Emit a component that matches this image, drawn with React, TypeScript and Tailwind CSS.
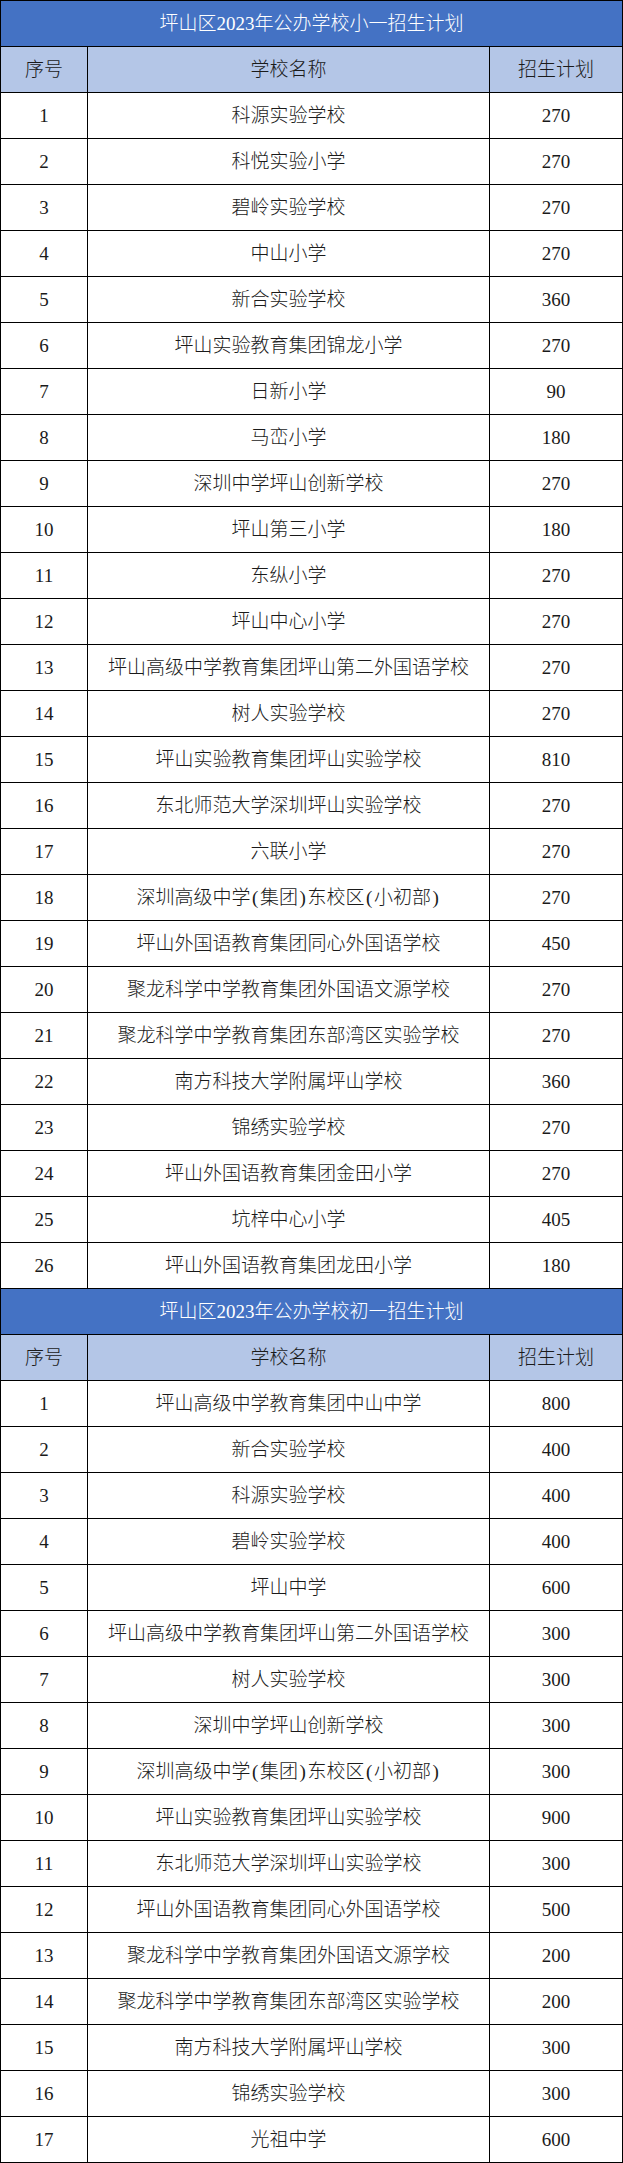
const primary: [string, string, number][] = [
  ["1", "科源实验学校", 270],
  ["2", "科悦实验小学", 270],
  ["3", "碧岭实验学校", 270],
  ["4", "中山小学", 270],
  ["5", "新合实验学校", 360],
  ["6", "坪山实验教育集团锦龙小学", 270],
  ["7", "日新小学", 90],
  ["8", "马峦小学", 180],
  ["9", "深圳中学坪山创新学校", 270],
  ["10", "坪山第三小学", 180],
  ["11", "东纵小学", 270],
  ["12", "坪山中心小学", 270],
  ["13", "坪山高级中学教育集团坪山第二外国语学校", 270],
  ["14", "树人实验学校", 270],
  ["15", "坪山实验教育集团坪山实验学校", 810],
  ["16", "东北师范大学深圳坪山实验学校", 270],
  ["17", "六联小学", 270],
  ["18", "深圳高级中学(集团)东校区(小初部)", 270],
  ["19", "坪山外国语教育集团同心外国语学校", 450],
  ["20", "聚龙科学中学教育集团外国语文源学校", 270],
  ["21", "聚龙科学中学教育集团东部湾区实验学校", 270],
  ["22", "南方科技大学附属坪山学校", 360],
  ["23", "锦绣实验学校", 270],
  ["24", "坪山外国语教育集团金田小学", 270],
  ["25", "坑梓中心小学", 405],
  ["26", "坪山外国语教育集团龙田小学", 180],
];

const junior: [string, string, number][] = [
  ["1", "坪山高级中学教育集团中山中学", 800],
  ["2", "新合实验学校", 400],
  ["3", "科源实验学校", 400],
  ["4", "碧岭实验学校", 400],
  ["5", "坪山中学", 600],
  ["6", "坪山高级中学教育集团坪山第二外国语学校", 300],
  ["7", "树人实验学校", 300],
  ["8", "深圳中学坪山创新学校", 300],
  ["9", "深圳高级中学(集团)东校区(小初部)", 300],
  ["10", "坪山实验教育集团坪山实验学校", 900],
  ["11", "东北师范大学深圳坪山实验学校", 300],
  ["12", "坪山外国语教育集团同心外国语学校", 500],
  ["13", "聚龙科学中学教育集团外国语文源学校", 200],
  ["14", "聚龙科学中学教育集团东部湾区实验学校", 200],
  ["15", "南方科技大学附属坪山学校", 300],
  ["16", "锦绣实验学校", 300],
  ["17", "光祖中学", 600],
];

// parentheses in the source are half-em wide, wider than Liberation Serif's
function Name({ text }: { text: string }) {
  const parts = text.split(/([()])/);
  return (
    <span>
      {parts.map((p, i) =>
        p === "(" || p === ")" ? (
          <span key={i} className="inline-block w-[9.5px] text-center">
            {p}
          </span>
        ) : (
          p
        )
      )}
    </span>
  );
}

function Row({ cells, header }: { cells: [string, string, string]; header?: boolean }) {
  const bg = header ? "bg-[#b4c6e7]" : "bg-white";
  return (
    <div className={`flex h-[46px] border-b border-black ${bg}`}>
      <div className="w-[87px] flex items-center justify-center border-r border-black">{cells[0]}</div>
      <div className="w-[402px] flex items-center justify-center border-r border-black">
        <Name text={cells[1]} />
      </div>
      <div className="w-[133px] flex items-center justify-center border-r border-black">{cells[2]}</div>
    </div>
  );
}

function Plan({ title, rows }: { title: string; rows: [string, string, number][] }) {
  return (
    <>
      <div className="h-[46px] flex items-center justify-center border-b border-r border-black bg-[#4472c4] text-white">
        {title}
      </div>
      <Row header cells={["序号", "学校名称", "招生计划"]} />
      {rows.map((r) => (
        <Row key={r[0]} cells={[r[0], r[1], String(r[2])]} />
      ))}
    </>
  );
}

export default function App() {
  return (
    <div className="w-[623px] border-l border-t border-black bg-white text-[19px] leading-none text-[#1a1a1a] font-light [font-family:'Liberation_Serif','Noto_Sans_CJK_SC',serif]">
      <Plan title="坪山区2023年公办学校小一招生计划" rows={primary} />
      <Plan title="坪山区2023年公办学校初一招生计划" rows={junior} />
    </div>
  );
}
